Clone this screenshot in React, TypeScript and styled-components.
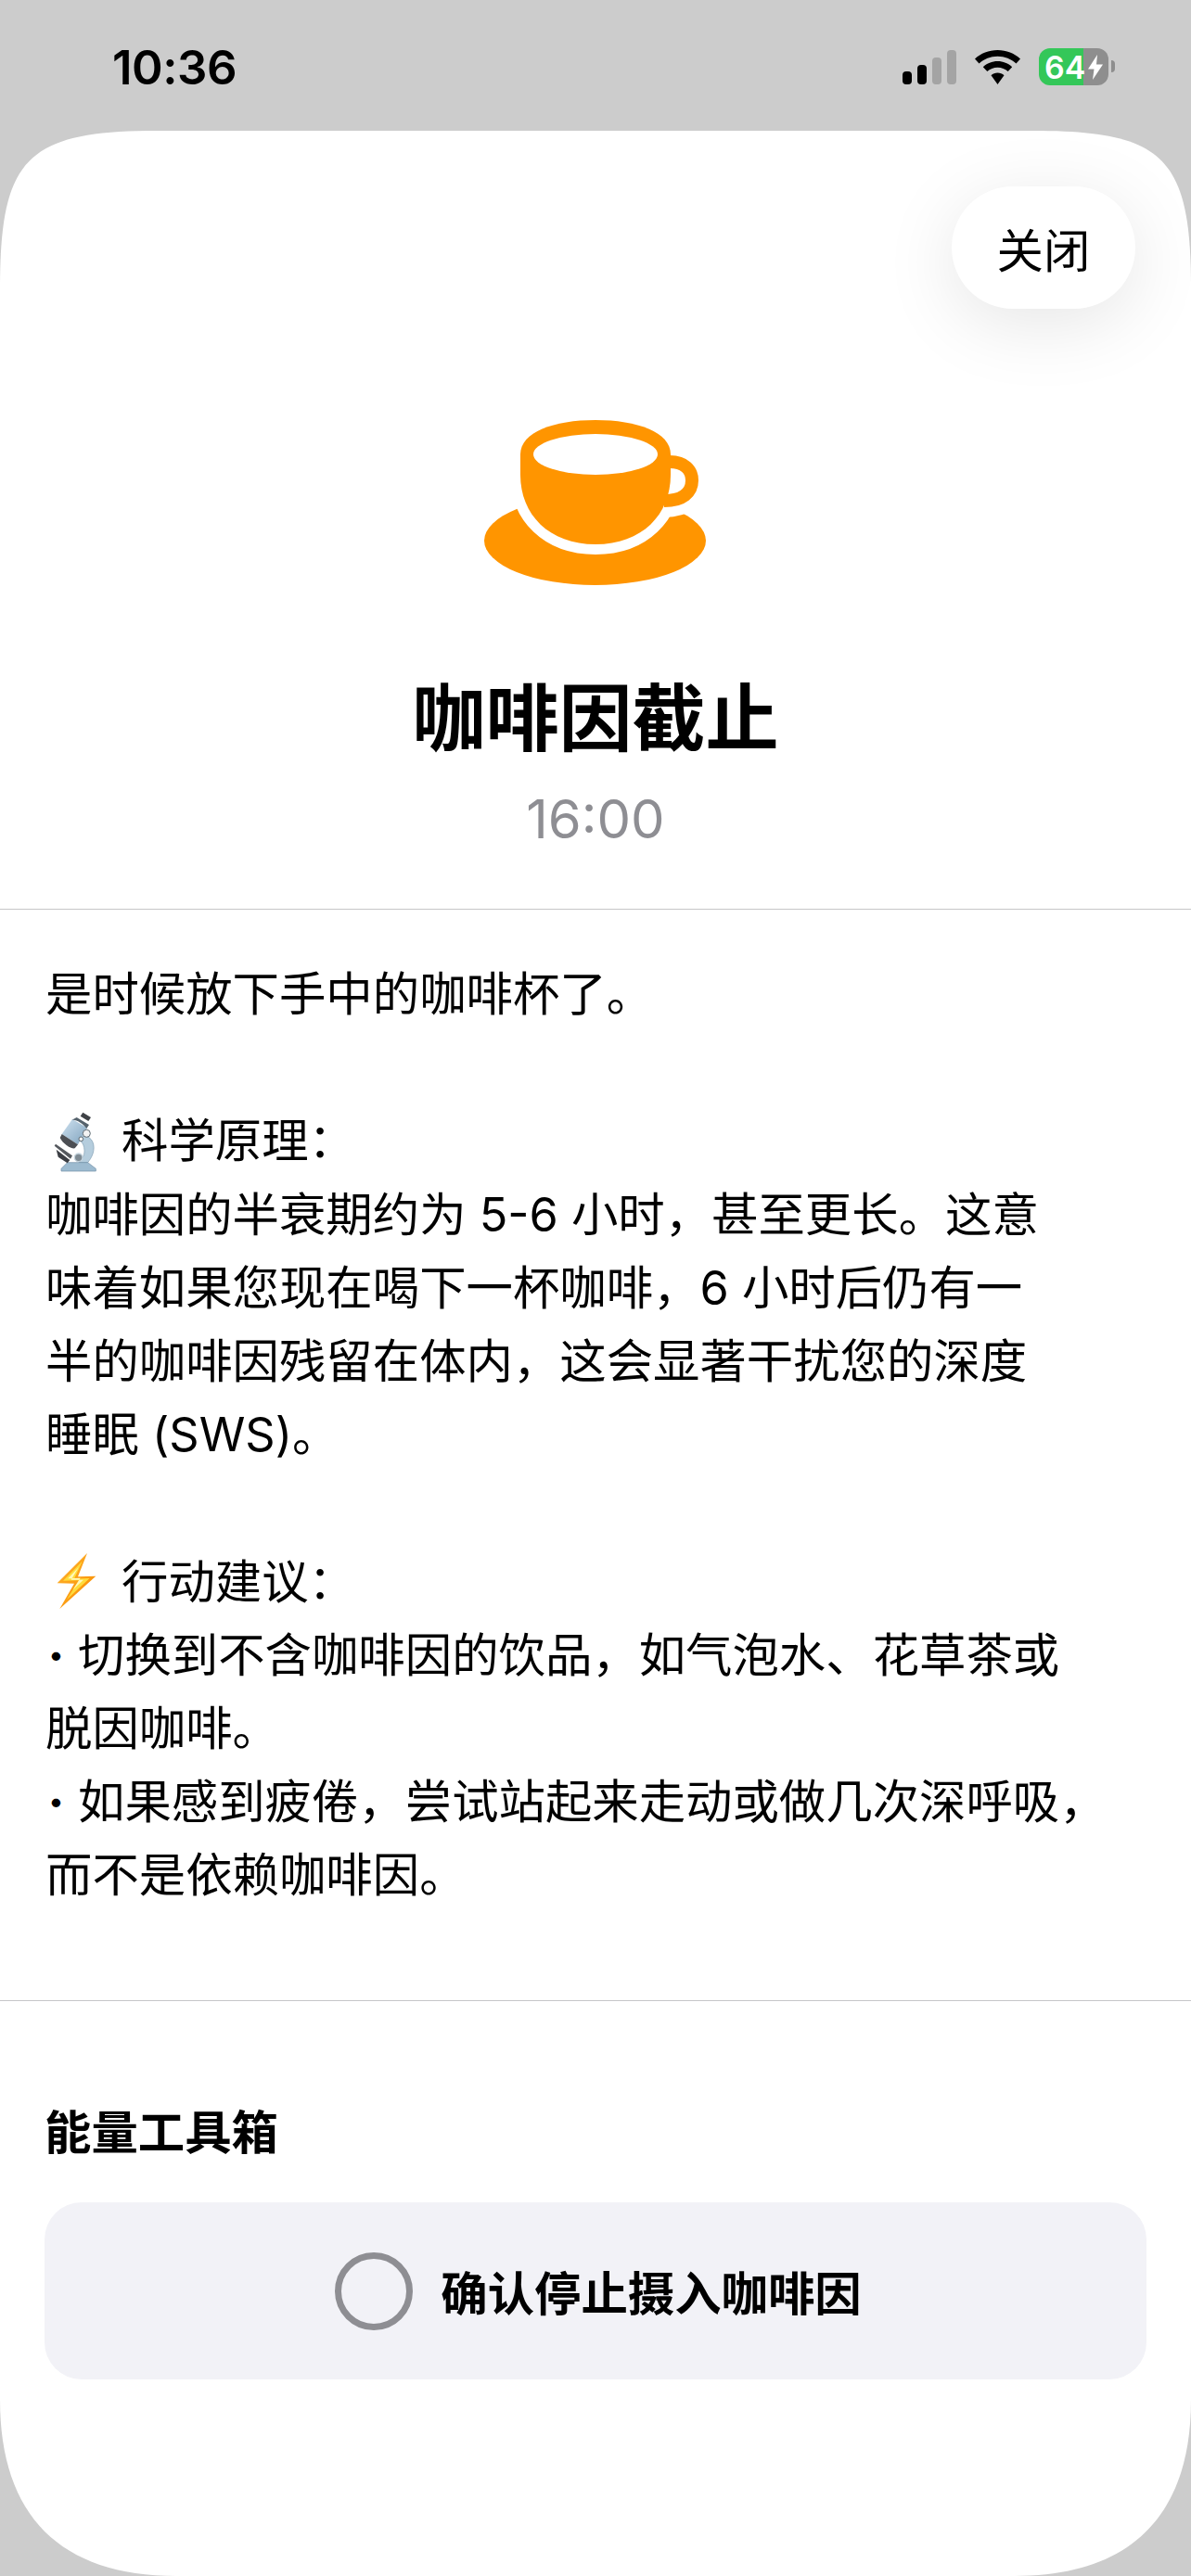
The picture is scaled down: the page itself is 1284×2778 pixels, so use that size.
import React from 'react';
import styled, { createGlobalStyle } from 'styled-components';

const GlobalStyle = createGlobalStyle`
  html, body {
    margin: 0;
    padding: 0;
    background: #cccccc;
  }
`;

const Page = styled.div`
  width: 1284px;
  height: 2778px;
  display: flex;
  flex-direction: column;
  background: #cccccc;
  font-family: Inter, 'Noto Sans CJK SC', sans-serif;
  color: #000;
  overflow: hidden;
`;

const StatusBar = styled.div`
  height: 141px;
  flex: none;
  box-sizing: border-box;
  padding: 0 89px 0 121px;
  display: flex;
  align-items: flex-start;
  justify-content: space-between;
`;

const Clock = styled.div`
  font-size: 51px;
  font-weight: 600;
  line-height: 60px;
  margin-top: 43px;
  letter-spacing: -0.5px;
`;

const StatusIcons = styled.div`
  display: flex;
  align-items: flex-start;
  margin-top: 52px;
`;

const SignalBars = styled.div`
  display: flex;
  align-items: flex-end;
  gap: 6px;
  height: 37px;
  margin-top: 2px;
`;

const Bar = styled.div<{ $h: number; $on?: boolean }>`
  width: 10px;
  height: ${p => p.$h}px;
  border-radius: 4px;
  background: ${p => (p.$on ? '#000' : '#a4a4a4')};
`;

const WifiIcon = styled.svg`
  width: 49px;
  height: 37px;
  margin: 2px 20px 0;
`;

const Battery = styled.div`
  position: relative;
  width: 75px;
  height: 40px;
  border-radius: 12px;
  background: linear-gradient(90deg, #34c759 64%, #8e8e8e 64%);
  color: #fff;
  display: flex;
  align-items: center;
  padding-left: 6px;
  box-sizing: border-box;
  font-size: 34px;
  font-weight: 600;

  &::after {
    content: '';
    position: absolute;
    left: 78px;
    top: 13px;
    width: 4px;
    height: 13px;
    border-radius: 0 6px 6px 0;
    background: #8e8e8e;
  }
`;

const BoltIcon = styled.svg`
  width: 16px;
  height: 27px;
  margin-left: 3px;
`;

// continuous corners: the top ones are tighter than the bottom ones
const Sheet = styled.div`
  position: relative;
  flex: 1;
  background: #fff;
  clip-path: path('M0 170C0 29 29 0 170 0L1114 0C1255 0 1284 29 1284 170L1284 2447C1284 2572 1219 2637 1094 2637L190 2637C65 2637 0 2572 0 2447Z');
`;

const CloseButton = styled.button`
  position: absolute;
  top: 60px;
  right: 60px;
  width: 198px;
  height: 132px;
  border: 0;
  border-radius: 66px;
  background: #fff;
  box-shadow: 0 16px 80px rgba(0, 0, 0, 0.1);
  font: 400 50.4px 'Noto Sans CJK SC', sans-serif;
  color: #000;
  padding: 0;
`;

const Header = styled.div`
  display: flex;
  flex-direction: column;
  align-items: center;
  padding-top: 312px;
  height: 840px;
  box-sizing: border-box;
  border-bottom: 1px solid #c6c6c8;
`;

const CupIcon = styled.svg`
  width: 239px;
  height: 178px;
  display: block;
  margin-right: 2px;
`;

const Title = styled.h1`
  margin: 95px 0 0;
  font: 700 79px/88px 'Noto Sans CJK SC', sans-serif;
`;

const Time = styled.div`
  margin-top: 34px;
  font-size: 58px;
  line-height: 70px;
  color: #8e8e93;
`;

const Body = styled.div`
  height: 1177px;
  box-sizing: border-box;
  padding: 51px 49px 0;
  border-bottom: 1px solid #c6c6c8;
  font-size: 50.4px;
  line-height: 79.2px;
`;

const Line = styled.div`
  height: 79.2px;
  white-space: nowrap;
  display: flex;
  align-items: center;
`;

const EmojiIcon = styled.svg`
  width: 60px;
  height: 72px;
  margin: 0 16px 0 6px;
  flex: none;
`;

const Bullet = styled.span`
  width: 35px;
  flex: none;
  font-size: 30px;
  padding-left: 3px;
  box-sizing: border-box;
`;

const Tools = styled.div`
  padding: 109px 48px 0;
`;

const ToolsTitle = styled.h2`
  margin: 0;
  font: 700 50.4px/60px 'Noto Sans CJK SC', sans-serif;
`;

const ConfirmButton = styled.div`
  margin-top: 48px;
  height: 191px;
  box-sizing: border-box;
  padding-left: 6px;
  border-radius: 40px;
  background: #f2f2f7;
  display: flex;
  align-items: center;
  justify-content: center;
  gap: 30px;
`;

const Radio = styled.div`
  width: 84px;
  height: 84px;
  box-sizing: border-box;
  border: 7px solid #8e8e93;
  border-radius: 50%;
`;

const ConfirmLabel = styled.span`
  font: 600 50.4px/60px 'Noto Sans CJK SC', sans-serif;
`;

const Cup = () => {
  const body =
    'M81 70C81 46 117 33 162 33C207 33 243 46 243 70L243 92C243 135 212 167 162 167C112 167 81 135 81 92Z';
  const handle = 'M242 78C258 78 266 87 266 98C266 111 256 120 236 120';
  return (
    <CupIcon viewBox="42 33 239 178">
      <ellipse cx="161.5" cy="163" rx="119.5" ry="48" fill="#ff9500" />
      <path d={body} fill="#fff" stroke="#fff" strokeWidth="22" />
      <path d={handle} fill="none" stroke="#fff" strokeWidth="36" />
      <path d={handle} fill="none" stroke="#ff9500" strokeWidth="14" />
      <path d={body} fill="#ff9500" />
      <ellipse cx="162" cy="70" rx="67" ry="22" fill="#fff" />
    </CupIcon>
  );
};

const Microscope = () => (
  <EmojiIcon viewBox="45 27 180 216">
    <defs>
      <linearGradient id="tube" x1="0" y1="0" x2="1" y2="1">
        <stop offset="0" stopColor="#cfe2f0" />
        <stop offset="1" stopColor="#7fa2bd" />
      </linearGradient>
    </defs>
    {/* arm and foot */}
    <path d="M150 120c28 0 40 30 30 58-4 12-10 20-16 28h-30c14-12 22-28 18-48-2-12-8-20-16-24z" fill="#b5cddd" stroke="#7d9bb1" strokeWidth="2" />
    <path d="M98 206h66l26 20v8H78v-8z" fill="#9dbbd0" stroke="#6f8ea6" strokeWidth="2" />
    <circle cx="134" cy="190" r="13" fill="#7f8b93" stroke="#c5d4de" strokeWidth="4" />
    {/* stage */}
    <path d="M60 146l54 38-6 10-52-42z" fill="#55595e" />
    <path d="M62 164l44 34-8 10-30-20z" fill="#3c3f44" />
    {/* tube */}
    <path d="M80 114l34-48 48 28-30 54z" fill="url(#tube)" />
    <path d="M110 70c12-6 36 8 50 26l8-12-40-24z" fill="#55626c" />
    <path d="M140 56l26 16 8-12-26-16z" fill="#3f4246" />
    <path d="M80 114l52 34-10 12c-14 2-38-14-48-34z" fill="#4c4f54" />
    <circle cx="160" cy="112" r="12" fill="#f3f3f3" stroke="#5f6a72" strokeWidth="3" />
    <circle cx="142" cy="130" r="7" fill="#f3f3f3" stroke="#5f6a72" strokeWidth="3" />
  </EmojiIcon>
);

const Lightning = () => (
  <EmojiIcon viewBox="75 -10 180 216">
    <defs>
      <linearGradient id="bolt" x1="0" y1="0" x2="1" y2="1">
        <stop offset="0" stopColor="#ffb52e" />
        <stop offset="1" stopColor="#f98a00" />
      </linearGradient>
    </defs>
    <path d="M192 8L95 105L150 106L103 188L220 82L162 84Z" fill="url(#bolt)" />
    <path d="M176 34L114 97L165 96L126 158L200 89L150 91Z" fill="#ffdc3c" />
    <path d="M164 54L130 90L170 88L146 126L180 94L140 94Z" fill="#fff8b8" />
  </EmojiIcon>
);

const App = () => {
  return (
    <Page>
      <GlobalStyle />
      <StatusBar>
        <Clock>10:36</Clock>
        <StatusIcons>
          <SignalBars>
            <Bar $h={14} $on />
            <Bar $h={21} $on />
            <Bar $h={29} />
            <Bar $h={37} />
          </SignalBars>
          <WifiIcon viewBox="0 0 49 37">
            <path d="M24.500 0C15 0 6.500 3.500 0 9.500L4.500 14.500C9.800 9.700 16.800 6.800 24.500 6.800S39.200 9.700 44.500 14.500L49 9.500C42.500 3.500 34 0 24.500 0Z" />
            <path d="M24.500 12C18.500 12 13 14.300 8.800 18.200L13.300 23C16.300 20.300 20.200 18.700 24.500 18.700S32.700 20.300 35.700 23L40.200 18.200C36 14.300 30.500 12 24.500 12Z" />
            <path d="M24.500 24.500C21.800 24.500 19.400 25.500 17.500 27.200L24.500 37L31.500 27.200C29.600 25.500 27.200 24.500 24.500 24.500Z" />
          </WifiIcon>
          <Battery>
            64
            <BoltIcon viewBox="0 0 16 27">
              <path d="M10 0L0 15.500H6.500L5 27L16 10.500H9Z" fill="#fff" />
            </BoltIcon>
          </Battery>
        </StatusIcons>
      </StatusBar>

      <Sheet>
        <CloseButton>关闭</CloseButton>
        <Header>
          <Cup />
          <Title>咖啡因截止</Title>
          <Time>16:00</Time>
        </Header>
        <Body>
          <Line>是时候放下手中的咖啡杯了。</Line>
          <Line />
          <Line>
            <Microscope />
            科学原理：
          </Line>
          <Line>咖啡因的半衰期约为 5-6 小时，甚至更长。这意</Line>
          <Line>味着如果您现在喝下一杯咖啡，6 小时后仍有一</Line>
          <Line>半的咖啡因残留在体内，这会显著干扰您的深度</Line>
          <Line>睡眠 (SWS)。</Line>
          <Line />
          <Line>
            <Lightning />
            行动建议：
          </Line>
          <Line>
            <Bullet>•</Bullet>切换到不含咖啡因的饮品，如气泡水、花草茶或
          </Line>
          <Line>脱因咖啡。</Line>
          <Line>
            <Bullet>•</Bullet>如果感到疲倦，尝试站起来走动或做几次深呼吸，
          </Line>
          <Line>而不是依赖咖啡因。</Line>
        </Body>
        <Tools>
          <ToolsTitle>能量工具箱</ToolsTitle>
          <ConfirmButton>
            <Radio />
            <ConfirmLabel>确认停止摄入咖啡因</ConfirmLabel>
          </ConfirmButton>
        </Tools>
      </Sheet>
    </Page>
  );
};

export default App;
